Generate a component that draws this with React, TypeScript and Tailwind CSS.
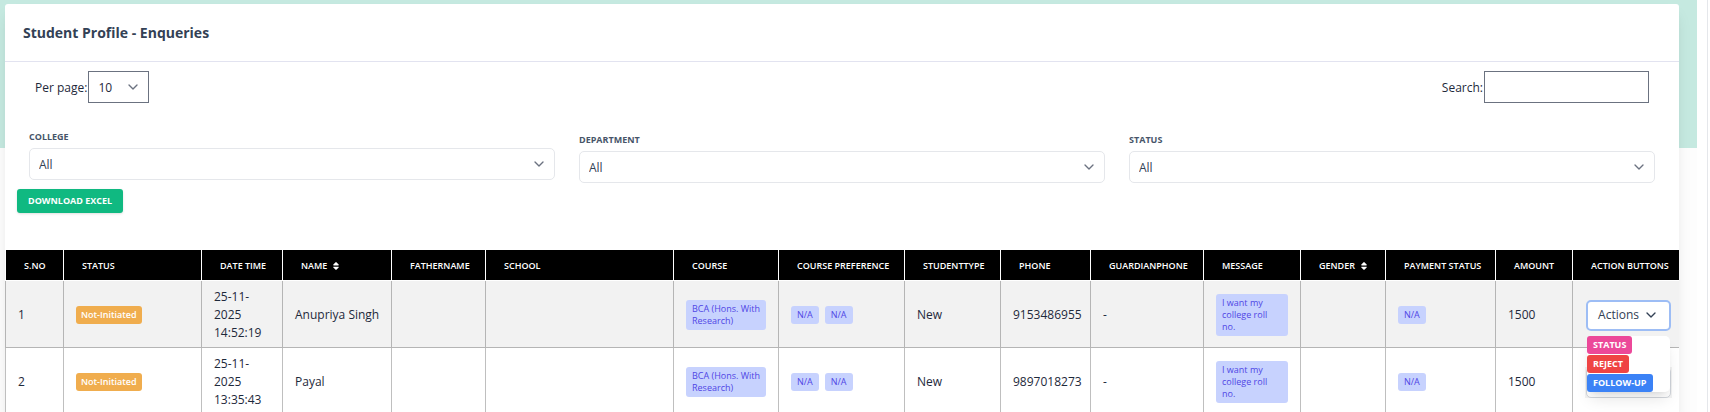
import { ChevronDown } from "lucide-react";
import { FaSort } from "react-icons/fa";
import type { ReactNode } from "react";

type Column = { label: string; width: string; sortable?: boolean };

const columns: Column[] = [
  { label: "S.No", width: "w-[58px]" },
  { label: "Status", width: "w-[138px]" },
  { label: "Date Time", width: "w-[81px]" },
  { label: "Name", width: "w-[109px]", sortable: true },
  { label: "FatherName", width: "w-[94px]" },
  { label: "School", width: "w-auto" },
  { label: "Course", width: "w-[105px]" },
  { label: "Course Preference", width: "w-[126px]" },
  { label: "StudentType", width: "w-[96px]" },
  { label: "Phone", width: "w-[90px]" },
  { label: "GuardianPhone", width: "w-[113px]" },
  { label: "Message", width: "w-[97px]" },
  { label: "Gender", width: "w-[85px]", sortable: true },
  { label: "Payment Status", width: "w-[110px]" },
  { label: "Amount", width: "w-[77px]" },
  { label: "Action Buttons", width: "w-[107px]" },
];

const enquiries = [
  { id: 1, date: "25-11-2025 14:52:19", name: "Anupriya Singh", phone: "9153486955", open: true },
  { id: 2, date: "25-11-2025 13:35:43", name: "Payal", phone: "9897018273", open: false },
];

function Tag({ children }: { children: ReactNode }) {
  return (
    <span className="inline-block rounded-[3px] bg-[#c7d2fe] px-1.5 py-[3px] align-middle text-[9px] leading-3 font-medium text-[#4f46e5]">
      {children}
    </span>
  );
}

function Cell({ children }: { children?: ReactNode }) {
  return <td className="border-b border-l border-black/25 px-3 pt-[7px] pb-[5px] align-middle">{children}</td>;
}

function Filter({ id, label, lowered }: { id: string; label: string; lowered?: boolean }) {
  return (
    <div className={lowered ? "px-3 pt-[3px]" : "px-3"}>
      <label htmlFor={id} className="mb-[5px] block pt-px text-[9px] leading-3 font-bold text-[#475569] uppercase">
        {label}
      </label>
      <div className="grid items-center">
        <select
          id={id}
          className="col-start-1 row-start-1 h-8 w-full appearance-none rounded-[5px] border border-[#e5e7eb] bg-white px-[9px] pt-px text-xs text-[#334155]"
        >
          <option>All</option>
        </select>
        <ChevronDown className="pointer-events-none col-start-1 row-start-1 mr-2 size-4 justify-self-end text-[#6b7280]" />
      </div>
    </div>
  );
}

function ActionMenu() {
  return (
    <div className="absolute top-full left-0.5 z-10 mt-[5px] flex w-[83px] flex-col items-start gap-px rounded-[5px] bg-white shadow-lg">
      <button className="rounded-[3px] bg-[#ec4899] px-1.5 py-[3px] text-[9px] leading-3 font-bold text-white">STATUS</button>
      <button className="rounded-[3px] bg-[#ef4444] px-1.5 py-[3px] text-[9px] leading-3 font-bold text-white">REJECT</button>
      <button className="rounded-[3px] bg-[#3b82f6] px-1.5 py-[3px] text-[9px] leading-3 font-bold text-white">FOLLOW-UP</button>
    </div>
  );
}

export default function App() {
  return (
    <div className="flex h-screen overflow-hidden bg-white font-['Open_Sans','Noto_Sans',sans-serif] text-xs leading-[18px] text-[#1e293b]">
      <div className="min-w-0 flex-1 bg-[linear-gradient(#c5e9e0_148px,#fdfdfd_148px)] pt-1 pr-[18px] pl-[5px]">
        <main className="min-h-full rounded-t-[3px] bg-white shadow-lg">
          <header className="border-b border-[#e2e3f0] px-[18px] py-[18px]">
            <h1 className="text-sm leading-[21px] font-bold text-[#334155]">Student Profile - Enqueries</h1>
          </header>

          <div className="flex items-center justify-between px-[30px] py-[9px]">
            <label className="flex items-center gap-px">
              <span className="pt-0.5">Per page:</span>
              <span className="grid items-center">
                <select className="col-start-1 row-start-1 h-8 w-[61px] appearance-none border border-[#6b7280] bg-white px-[9px] pt-px">
                  <option>10</option>
                </select>
                <ChevronDown className="pointer-events-none col-start-1 row-start-1 mr-2 size-4 justify-self-end text-[#6b7280]" />
              </span>
            </label>
            <label className="flex items-center gap-px">
              <span className="pt-0.5">Search:</span>
              <input type="text" className="h-8 w-[165px] border border-[#6b7280] bg-white px-2" />
            </label>
          </div>

          <div className="mx-3 mt-[18px] grid grid-cols-3">
            <Filter id="college" label="College" />
            <Filter id="department" label="Department" lowered />
            <Filter id="status" label="Status" lowered />
          </div>

          <div className="flex px-3 pt-1.5">
            <button className="h-6 rounded-[3px] bg-[#10b981] px-[11px] text-[9px] leading-3 font-bold text-white shadow-sm">
              DOWNLOAD EXCEL
            </button>
          </div>

          <div className="mt-[37px] overflow-x-clip">
            <table className="w-full table-fixed border-separate border-spacing-0">
              <colgroup>
                {columns.map((c) => (
                  <col key={c.label} className={c.width} />
                ))}
              </colgroup>
              <thead>
                <tr>
                  {columns.map((c) => (
                    <th
                      key={c.label}
                      className="h-[31px] border-b border-l border-white bg-black bg-clip-padding pt-px pl-[18px] text-left text-[9px] leading-3 font-semibold whitespace-nowrap text-white uppercase"
                    >
                      <span className="inline-flex items-center gap-1">
                        {c.label}
                        {c.sortable && <FaSort className="size-2.5" />}
                      </span>
                    </th>
                  ))}
                </tr>
              </thead>
              <tbody>
                {enquiries.map((e) => (
                  <tr key={e.id} className="bg-white odd:bg-[#f2f2f2]">
                    <Cell>{e.id}</Cell>
                    <Cell>
                      <span className="inline-block rounded-[3px] bg-[#f0ad4e] px-[5px] py-[3px] align-middle text-[9px] leading-3 font-semibold text-white">
                        Not-Initiated
                      </span>
                    </Cell>
                    <Cell>{e.date}</Cell>
                    <Cell>
                      <span className="whitespace-nowrap">{e.name}</span>
                    </Cell>
                    <Cell />
                    <Cell />
                    <Cell>
                      <Tag>
                        <span className="block w-[68px]">
                          <span className="whitespace-nowrap">BCA (Hons. With</span> Research)
                        </span>
                      </Tag>
                    </Cell>
                    <Cell>
                      <div className="flex gap-1.5">
                        <Tag>N/A</Tag>
                        <Tag>N/A</Tag>
                      </div>
                    </Cell>
                    <Cell>New</Cell>
                    <Cell>{e.phone}</Cell>
                    <Cell>-</Cell>
                    <Cell>
                      <Tag>I want my college roll no.</Tag>
                    </Cell>
                    <Cell />
                    <Cell>
                      <Tag>N/A</Tag>
                    </Cell>
                    <Cell>1500</Cell>
                    <Cell>
                      <div className="relative w-[87px] bg-[#f2f2f2] px-px">
                        <button
                          aria-label="Actions"
                          className={
                            e.open
                              ? "flex h-[31px] w-full items-center justify-end gap-1 rounded-[5px] border-2 border-[#9dbdf5] bg-white pr-2.5 text-[#334155]"
                              : "flex h-[31px] w-full items-center justify-end gap-1 rounded-[5px] border border-[#d1d5db] bg-white pr-2.5 text-[#334155]"
                          }
                        >
                          {e.open && "Actions"}
                          <ChevronDown className="size-4" />
                        </button>
                        {e.open && <ActionMenu />}
                      </div>
                    </Cell>
                  </tr>
                ))}
              </tbody>
            </table>
          </div>
        </main>
      </div>
      <div className="mr-0.5 w-[11px] border-r border-[#e5e7eb] bg-white" />
    </div>
  );
}
